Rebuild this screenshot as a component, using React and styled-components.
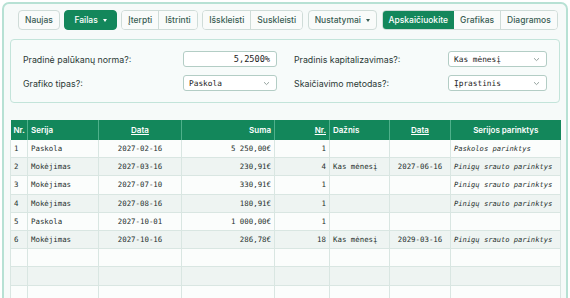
import React from "react";
import styled, { createGlobalStyle } from "styled-components";

const GlobalStyle = createGlobalStyle`
  html, body { margin: 0; padding: 0; background: #ffffff; }
  body { font-family: Inter, "Noto Sans", sans-serif; overflow: hidden; }
`;

const mono = `"DejaVu Sans Mono", "Liberation Mono", monospace`;
const green = "#13875b";

const Page = styled.div`
  margin: 2px;
  height: 420px;
  box-sizing: border-box;
  border: 2px solid #b7e1d4;
  border-radius: 7px;
  background: #f6faf9;
  padding: 6px;
`;

const Toolbar = styled.div`
  display: flex;
  align-items: center;
  gap: 4.5px;
  padding: 0 8px;
`;

const Group = styled.div`
  display: flex;
  flex-shrink: 0;
  border: 1px solid #cfdcd8;
  border-radius: 4px;
  overflow: hidden;
  background: #f9fbfa;
`;

const Button = styled.button`
  flex-shrink: 0;
  white-space: nowrap;
  height: ${(p) => (p.grouped ? "18px" : "20px")};
  padding: 0 ${(p) => p.pad || 6}px;
  font-family: Inter, "Noto Sans", sans-serif;
  font-size: 8.5px;
  font-weight: 500;
  display: flex;
  align-items: center;
  gap: 5px;
  cursor: pointer;
  color: ${(p) => (p.active ? "#ffffff" : "#3a5d54")};
  background: ${(p) => (p.active ? green : "#f9fbfa")};
  border: ${(p) => (p.grouped ? "none" : `1px solid ${p.active ? green : "#cfdcd8"}`)};
  border-left: ${(p) => (p.divider ? "1px solid #cfdcd8" : p.grouped ? "none" : undefined)};
  border-radius: ${(p) => (p.grouped ? "0" : "4px")};
`;

const Caret = styled.span`
  width: 0;
  height: 0;
  border-left: 2.5px solid transparent;
  border-right: 2.5px solid transparent;
  border-top: 3px solid ${(p) => (p.light ? "#ffffff" : "#3a5d54")};
`;

const Panel = styled.div`
  margin-top: 9px;
  border: 1px solid #c3e4da;
  border-radius: 4px;
  background: #f7fbfa;
  padding: 11px 12px 11px 12px;
  display: grid;
  grid-template-columns: 160px 94px 1fr 99px;
  row-gap: 8px;
  align-items: center;
`;

const Label = styled.label`
  font-size: 8.8px;
  color: #2b3a36;
  padding-left: ${(p) => (p.right ? "17px" : "0")};
`;

const Field = styled.div`
  height: 16px;
  box-sizing: border-box;
  border: 1px solid #b3cdc5;
  border-radius: 3px;
  background: #ffffff;
  display: flex;
  align-items: center;
  justify-content: ${(p) => (p.end ? "flex-end" : "space-between")};
  padding: 0 6px 0 5px;
  font-family: ${mono};
  font-size: ${(p) => (p.end ? "8.6px" : "7.8px")};
  color: #222;
`;

const Chevron = () => (
  <svg width="7" height="5" viewBox="0 0 7 5">
    <path d="M1 1.2 L3.5 3.6 L6 1.2" fill="none" stroke="#8a9894" strokeWidth="0.9" />
  </svg>
);

const Table = styled.table`
  margin-top: 17px;
  width: 550px;
  table-layout: fixed;
  border-collapse: collapse;
`;

const Th = styled.th`
  height: 20px;
  padding: 0 3px;
  background: ${green};
  color: #ffffff;
  font-family: Inter, "Noto Sans", sans-serif;
  font-size: 8px;
  font-weight: 600;
  text-align: ${(p) => p.align || "left"};
  text-decoration: ${(p) => (p.link ? "underline" : "none")};
  border-right: 1px solid #4fb08b;
  white-space: nowrap;
  &:last-child { border-right: none; }
`;

const Tr = styled.tr`
  background: ${(p) => (p.odd ? "#eef4f2" : "#fbfdfc")};
`;

const Td = styled.td`
  height: 17.2px;
  padding: 0 3px;
  border: 1px solid #d9e6e2;
  border-top: none;
  font-family: ${mono};
  font-size: ${(p) => (p.italic ? "7.1px" : "7.4px")};
  color: #26302d;
  text-align: ${(p) => p.align || "left"};
  font-style: ${(p) => (p.italic ? "italic" : "normal")};
  white-space: nowrap;
  overflow: hidden;
`;

const rows = [
  ["1", "Paskola", "2027-02-16", "5 250,00€", "1", "", "", "Paskolos parinktys"],
  ["2", "Mokėjimas", "2027-03-16", "230,91€", "4", "Kas mėnesį", "2027-06-16", "Pinigų srauto parinktys"],
  ["3", "Mokėjimas", "2027-07-10", "330,91€", "1", "", "", "Pinigų srauto parinktys"],
  ["4", "Mokėjimas", "2027-08-16", "180,91€", "1", "", "", "Pinigų srauto parinktys"],
  ["5", "Paskola", "2027-10-01", "1 000,00€", "1", "", "", ""],
  ["6", "Mokėjimas", "2027-10-16", "286,78€", "18", "Kas mėnesį", "2029-03-16", "Pinigų srauto parinktys"],
  ["", "", "", "", "", "", "", ""],
  ["", "", "", "", "", "", "", ""],
  ["", "", "", "", "", "", "", ""],
  ["", "", "", "", "", "", "", ""],
];

const widths = [17, 71, 83, 93, 55, 60, 61, 110];
const aligns = ["left", "left", "center", "right", "right", "left", "center", "left"];

export default function App() {
  return (
    <>
      <GlobalStyle />
      <Page>
        <Toolbar>
          <Button>Naujas</Button>
          <Button active pad={9}>
            Failas <Caret light />
          </Button>
          <Group>
            <Button grouped>Įterpti</Button>
            <Button grouped divider>Ištrinti</Button>
          </Group>
          <Group>
            <Button grouped>Išskleisti</Button>
            <Button grouped divider>Suskleisti</Button>
          </Group>
          <Button>
            Nustatymai <Caret />
          </Button>
          <Group>
            <Button grouped active>Apskaičiuokite</Button>
            <Button grouped>Grafikas</Button>
            <Button grouped divider>Diagramos</Button>
          </Group>
        </Toolbar>

        <Panel>
          <Label>Pradinė palūkanų norma?:</Label>
          <Field end>5,2500%</Field>
          <Label right>Pradinis kapitalizavimas?:</Label>
          <Field>Kas mėnesį<Chevron /></Field>
          <Label>Grafiko tipas?:</Label>
          <Field>Paskola<Chevron /></Field>
          <Label right>Skaičiavimo metodas?:</Label>
          <Field>Įprastinis<Chevron /></Field>
        </Panel>

        <Table>
          <colgroup>
            {widths.map((w, i) => (
              <col key={i} style={{ width: w }} />
            ))}
          </colgroup>
          <thead>
            <tr>
              <Th>Nr.</Th>
              <Th>Serija</Th>
              <Th align="center" link>Data</Th>
              <Th align="right">Suma</Th>
              <Th align="right" link>Nr.</Th>
              <Th>Dažnis</Th>
              <Th align="center" link>Data</Th>
              <Th align="center">Serijos parinktys</Th>
            </tr>
          </thead>
          <tbody>
            {rows.map((r, i) => (
              <Tr key={i} odd={i % 2 === 1}>
                {r.map((c, j) => (
                  <Td key={j} align={aligns[j]} italic={j === 7}>
                    {c}
                  </Td>
                ))}
              </Tr>
            ))}
          </tbody>
        </Table>
      </Page>
    </>
  );
}
